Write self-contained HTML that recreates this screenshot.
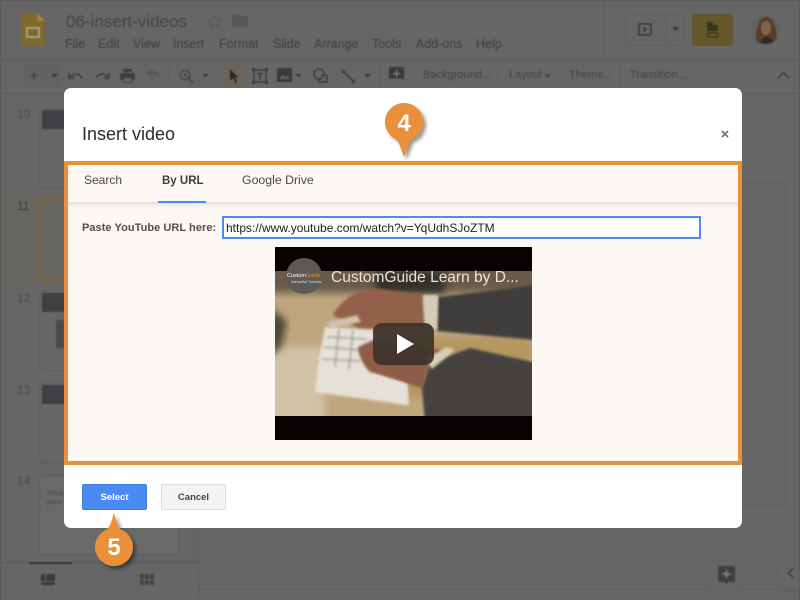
<!DOCTYPE html>
<html><head><meta charset="utf-8"><style>
*{box-sizing:border-box}
html,body{margin:0;padding:0;width:800px;height:600px;overflow:hidden;background:#666;font-family:"Liberation Sans",sans-serif}
.a{position:absolute}
.t{position:absolute;white-space:nowrap;line-height:1}
.m{color:#3e3e3e;font-size:12.5px;top:38px}
.tb{color:#424242;font-size:11px;top:70px}
.n{color:#4a4a4a;font-size:12px;left:17px}
.th{position:absolute;left:39px;width:140px;height:80px;border:1px solid #5e5e5e;border-radius:4px}
.hd{position:absolute;left:42px;width:28px;height:19px;background:#404044}
.tab{position:absolute;top:174px;line-height:1;color:#4a4a4a;white-space:nowrap}
#bg{position:absolute;left:0;top:0;width:800px;height:600px;filter:blur(.45px)}
</style></head><body>
<div id="bg">
<div class="a" style="left:0;top:0;width:800px;height:600px;background:#666;border:1px solid #555;border-bottom:0"></div>
<div class="a" style="left:1px;top:59px;width:798px;height:1px;background:#5a5a5a"></div>
<div class="a" style="left:1px;top:93px;width:798px;height:1px;background:#5c5c5c"></div>
<div class="a" style="left:604px;top:0;width:1px;height:59px;background:#5c5c5c"></div>

<svg class="a" style="left:21px;top:13px" width="25" height="33" viewBox="0 0 25 33"><path d="M2 0H16L24 8V31a2 2 0 0 1-2 2H2a2 2 0 0 1-2-2V2a2 2 0 0 1 2-2z" fill="#80692c"/><path d="M16 0L24 8H16z" fill="#9c8340"/><rect x="6" y="15" width="12" height="9" fill="none" stroke="#a89f80" stroke-width="2"/></svg>
<div class="t" style="left:66px;top:13px;font-size:17px;color:#444">06-insert-videos</div>
<svg class="a" style="left:207px;top:13px" width="16" height="16" viewBox="0 0 16 16"><path d="M8 1.500l2 4.600 5 .4-3.800 3.300 1.200 4.900L8 12.100l-4.400 2.600 1.200-4.900L1 6.500l5-.4z" fill="none" stroke="#5c5c5c" stroke-width="1.200"/></svg>
<svg class="a" style="left:232px;top:14px" width="16" height="13" viewBox="0 0 16 13"><path d="M1 0h5l2 2h7a1 1 0 0 1 1 1v9a1 1 0 0 1-1 1H1a1 1 0 0 1-1-1V1a1 1 0 0 1 1-1z" fill="#585858"/></svg>
<div class="t m" style="left:65px">File</div><div class="t m" style="left:98px">Edit</div><div class="t m" style="left:133px">View</div><div class="t m" style="left:173px">Insert</div><div class="t m" style="left:219px">Format</div><div class="t m" style="left:273px">Slide</div><div class="t m" style="left:314px">Arrange</div><div class="t m" style="left:372px">Tools</div><div class="t m" style="left:416px">Add-ons</div><div class="t m" style="left:476px">Help</div>

<div class="a" style="left:626px;top:14px;width:59px;height:32px;border:1px solid #5e5e5e;border-radius:4px"></div>
<div class="a" style="left:666px;top:14px;width:1px;height:32px;background:#5e5e5e"></div>
<svg class="a" style="left:638px;top:23px" width="15" height="13" viewBox="0 0 15 13"><rect x="1" y="1" width="12" height="11" fill="none" stroke="#3a3a3a" stroke-width="1.600"/><path d="M5.500 3.800L9.500 6.500 5.500 9.200z" fill="#3a3a3a"/></svg>
<svg class="a" style="left:671px;top:27px" width="9" height="5"><path d="M1 0h7L4.500 4.500z" fill="#3a3a3a"/></svg>
<div class="a" style="left:692px;top:14px;width:41px;height:32px;background:#66562c;border-radius:3px"></div>
<svg class="a" style="left:706px;top:22px" width="14" height="16" viewBox="0 0 14 16"><path d="M1 0h6v3h5v6H1z" fill="#38341f"/><rect x="1" y="11" width="11" height="4" rx="2" fill="none" stroke="#38341f" stroke-width="1.200"/></svg>
<svg class="a" style="left:751px;top:15px" width="29" height="29" viewBox="0 0 29 29"><defs><clipPath id="av"><circle cx="14.500" cy="14.500" r="14.500"/></clipPath></defs><g clip-path="url(#av)"><rect width="29" height="29" fill="#5e6261"/><path d="M5 29C4 14 8 2 15 2s11 10 11 27z" fill="#5e3d28"/><ellipse cx="15" cy="13" rx="5" ry="7" fill="#82654f"/><path d="M8 29c2-5 5-7 8-7s6 2 8 7z" fill="#2c2c30"/></g></svg>

<div class="a" style="left:23px;top:64px;width:38px;height:23px;background:#626262"></div>
<div class="t" style="left:29px;top:67px;font-size:17px;color:#3e3e3e">+</div>
<svg class="a" style="left:51px;top:74px" width="8" height="4"><path d="M0 0h7L3.500 4z" fill="#3e3e3e"/></svg>
<svg class="a" style="left:67px;top:69px" width="17" height="14" viewBox="0 0 17 14"><path d="M4 8c3-4 8-4 11 1" fill="none" stroke="#444" stroke-width="2"/><path d="M1 3v7h7z" fill="#444"/></svg>
<svg class="a" style="left:94px;top:69px" width="17" height="14" viewBox="0 0 17 14"><path d="M13 8C10 4 5 4 2 9" fill="none" stroke="#444" stroke-width="2"/><path d="M16 3v7H9z" fill="#444"/></svg>
<svg class="a" style="left:120px;top:69px" width="15" height="15" viewBox="0 0 15 15"><path d="M3 0h9v3H3zM1 4h13a1 1 0 0 1 1 1v6h-3v3H3v-3H0V5a1 1 0 0 1 1-1z" fill="#3e3e3e"/><rect x="4" y="9" width="7" height="4" fill="#666"/></svg>
<svg class="a" style="left:146px;top:69px" width="13" height="15" viewBox="0 0 15 15"><path d="M1 1h11v5H1zM13 3h2v5H8v6H6V7h7z" fill="#575757"/></svg>
<div class="a" style="left:168px;top:66px;width:1px;height:19px;background:#5d5d5d"></div>
<svg class="a" style="left:179px;top:69px" width="15" height="15" viewBox="0 0 16 16"><circle cx="6.500" cy="6.500" r="5" fill="none" stroke="#444" stroke-width="1.500"/><path d="M10 10l5 5" stroke="#444" stroke-width="2"/><path d="M4 6.500h5M6.500 4v5" stroke="#444"/></svg>
<svg class="a" style="left:202px;top:74px" width="8" height="4"><path d="M0 0h7L3.500 4z" fill="#3e3e3e"/></svg>
<div class="a" style="left:223px;top:64px;width:23px;height:23px;background:#6a6558"></div>
<svg class="a" style="left:229px;top:69px" width="11" height="14" viewBox="0 0 12 15"><path d="M1 0l9.500 9H6.500l2.500 5-2 1-2.500-5L1 12.500z" fill="#2a2a2a"/></svg>
<svg class="a" style="left:252px;top:68px" width="16" height="16" viewBox="0 0 16 16"><rect x="2" y="2" width="12" height="12" fill="none" stroke="#3a3a3a" stroke-width="1.200"/><path d="M5 5h6v1.500H8.800V12H7.200V6.500H5z" fill="#3a3a3a"/><path d="M0 0h3v3H0zM13 0h3v3h-3zM0 13h3v3H0zM13 13h3v3h-3z" fill="#3a3a3a"/></svg>
<svg class="a" style="left:277px;top:68px" width="15" height="14" viewBox="0 0 15 14"><rect width="15" height="14" fill="#3a3a3a"/><path d="M2 11l4-4 2.500 2.500L10.500 8 13 11z" fill="#666"/></svg>
<svg class="a" style="left:295px;top:74px" width="8" height="4"><path d="M0 0h7L3.500 4z" fill="#3e3e3e"/></svg>
<svg class="a" style="left:313px;top:68px" width="16" height="16" viewBox="0 0 16 16"><circle cx="6" cy="6" r="5" fill="none" stroke="#3e3e3e" stroke-width="1.500"/><path d="M8 7h6v7H6V11" fill="none" stroke="#3e3e3e" stroke-width="1.500"/></svg>
<svg class="a" style="left:341px;top:69px" width="15" height="15" viewBox="0 0 15 15"><path d="M2 2l11 11" stroke="#3e3e3e" stroke-width="1.600"/><circle cx="2.500" cy="2.500" r="1.800" fill="#3e3e3e"/><circle cx="12.500" cy="12.500" r="1.800" fill="#3e3e3e"/></svg>
<svg class="a" style="left:364px;top:74px" width="8" height="4"><path d="M0 0h7L3.500 4z" fill="#3e3e3e"/></svg>
<div class="a" style="left:379px;top:66px;width:1px;height:19px;background:#5d5d5d"></div>
<svg class="a" style="left:389px;top:67px" width="15" height="15" viewBox="0 0 15 15"><path d="M0 0h15v13l-3-1.500H0z" fill="#3a3a3a"/><path d="M7 3h1.500v3H11v1.500H8.500v3H7v-3H4V6h3z" fill="#777"/></svg>
<div class="t tb" style="left:423px">Background...</div>
<div class="a" style="left:498px;top:66px;width:1px;height:19px;background:#5d5d5d"></div>
<div class="t tb" style="left:509px">Layout</div>
<svg class="a" style="left:544px;top:74px" width="7" height="4"><path d="M0 0h7L3.500 4z" fill="#484848"/></svg>
<div class="t tb" style="left:569px">Theme...</div>
<div class="a" style="left:620px;top:66px;width:1px;height:19px;background:#5d5d5d"></div>
<div class="t tb" style="left:630px">Transition...</div>
<svg class="a" style="left:777px;top:71px" width="13" height="8" viewBox="0 0 13 8"><path d="M1 7l5.500-5.500L12 7" fill="none" stroke="#484848" stroke-width="2"/></svg>

<div class="a" style="left:1px;top:195px;width:197px;height:90px;background:#686660"></div>
<div class="a" style="left:198px;top:94px;width:1px;height:506px;background:#5c5c5c"></div>
<div class="a" style="left:1px;top:562px;width:197px;height:1px;background:#5a5a5a"></div>
<div class="t n" style="top:108px">10</div>
<div class="th" style="top:108px"></div><div class="hd" style="top:110px"></div>
<div class="t n" style="top:200px;color:#3a3a3a">11</div>
<div class="th" style="top:199px;border:2px solid #7a6835;height:82px"></div>
<div class="t n" style="top:292px">12</div>
<div class="th" style="top:291px"></div><div class="hd" style="top:293px"></div>
<div class="a" style="left:56px;top:320px;width:8px;height:28px;background:#4a4a4a"></div>
<div class="t n" style="top:384px">13</div>
<div class="th" style="top:383px"></div><div class="hd" style="top:385px"></div>
<div class="t n" style="top:475px">14</div>
<div class="th" style="top:475px;background:#6a6a6a;height:80px"></div>
<div class="t" style="left:47px;top:488px;font:7.500px/9px 'Liberation Serif',serif;color:#444">What<br>prese</div>
<div class="a" style="left:29px;top:562px;width:43px;height:2px;background:#333"></div>
<svg class="a" style="left:41px;top:574px" width="14" height="11" viewBox="0 0 14 11"><path d="M0 0h4v7H0zM5 0h9v7H5zM0 8h14v3H0z" fill="#3a3a3a"/></svg>
<svg class="a" style="left:140px;top:574px" width="14" height="11" viewBox="0 0 14 11"><path d="M0 0h4v5H0zM5 0h4v5H5zM10 0h4v5h-4zM0 6h4v5H0zM5 6h4v5H5zM10 6h4v5h-4z" fill="#444"/></svg>
<div class="a" style="left:190px;top:94px;width:6px;height:468px;background:#646464"></div>

<div class="a" style="left:742px;top:182px;width:44px;height:323px;background:#666;border:1px solid #5c605c;border-left:0"></div>
<div class="a" style="left:199px;top:589px;width:600px;height:1px;background:#5e5e5e"></div>
<div class="a" style="left:709px;top:557px;width:33px;height:33px;border:1px solid #606060;border-radius:3px"></div>
<svg class="a" style="left:718px;top:566px" width="17" height="18" viewBox="0 0 18 19"><path d="M2 0h14a2 2 0 0 1 2 2v13a2 2 0 0 1-2 2h-5l-2 2-2-2H2a2 2 0 0 1-2-2V2a2 2 0 0 1 2-2z" fill="#404040"/><path d="M9 3l1.500 4L15 8.500 10.500 10 9 14l-1.500-4L3 8.500 7.500 7z" fill="#777"/></svg>
<div class="a" style="left:777px;top:555px;width:38px;height:38px;border-radius:50%;border:1px solid #5e5e5e"></div>
<svg class="a" style="left:787px;top:568px" width="7" height="10" viewBox="0 0 7 10"><path d="M6 .5L1.500 5 6 9.500" fill="none" stroke="#3a3a3a" stroke-width="1.400"/></svg>
</div>

<div class="a" style="left:64px;top:88px;width:678px;height:440px;background:#fff;border-radius:7px"></div>
<div class="t" style="left:82px;top:125px;font-size:18px;color:#2b2b2b">Insert video</div>
<svg class="a" style="left:721px;top:130px" width="8" height="8" viewBox="0 0 8 8"><path d="M1 1l6 6M7 1L1 7" stroke="#777" stroke-width="1.800"/></svg>

<div class="a" style="left:64px;top:161px;width:678px;height:304px;background:#fdf8f4;border:4px solid #ea8f3a"></div>
<div class="a" style="left:68px;top:202px;width:670px;height:6px;background:linear-gradient(#e3dfdb,#fdf8f4)"></div>
<div class="tab" style="left:84px;font-size:12px">Search</div>
<div class="tab" style="left:162px;top:176px;font-weight:bold;color:#3d3d3d;font-size:11.5px">By URL</div>
<div class="tab" style="left:242px;font-size:12.3px">Google Drive</div>
<div class="a" style="left:158px;top:201px;width:48px;height:2px;background:#4d8bf0"></div>

<div class="t" style="left:82px;top:223px;font-size:11px;font-weight:bold;color:#505050;letter-spacing:.05px">Paste YouTube URL here:</div>
<div class="a" style="left:222px;top:216px;width:479px;height:23px;background:#fff;border:2px solid #4d8bf0"></div>
<div class="t" style="left:226px;top:222px;font-size:12px;color:#222">https://www.youtube.com/watch?v=YqUdhSJoZTM</div>

<svg class="a" style="left:275px;top:247px" width="257" height="193" viewBox="0 0 257 193">
<defs><filter id="b" x="-20%" y="-20%" width="140%" height="140%"><feGaussianBlur stdDeviation="4"/></filter><filter id="b2" x="-10%" y="-10%" width="120%" height="120%"><feGaussianBlur stdDeviation="1.300"/></filter>
<clipPath id="v"><rect y="24" width="257" height="145"/></clipPath></defs>
<rect width="257" height="193" fill="#060302"/>
<g clip-path="url(#v)">
<rect y="24" width="257" height="145" fill="#bfa67e"/>
<rect x="-10" y="14" width="280" height="32" fill="#6a5a48" filter="url(#b)"/>
<rect x="100" y="24" width="70" height="22" fill="#33302a" filter="url(#b)"/>
<rect x="-10" y="100" width="60" height="80" fill="#d3c3a6" filter="url(#b)"/>
<path d="M130 90H257V125L170 150H130z" fill="#b59560" filter="url(#b)"/>
<path d="M-5 60L12 75 6 100-5 110z" fill="#4a4236" filter="url(#b)"/>
<path d="M163 50L260 38V93L162 84z" fill="#403e3c" filter="url(#b2)"/>
<path d="M58 68C68 50 82 44 98 41L148 48 150 80 85 82z" fill="#936048" filter="url(#b2)"/>
<path d="M148 48h15l-1 35-12-3z" fill="#d6ccba" filter="url(#b2)"/>
<path d="M50 76L82 68 86 75 58 81z" fill="#cdc3af" filter="url(#b2)"/>
<path d="M50 80L98 83 132 136 132 158 40 145 44 112z" fill="#e6e1d7" filter="url(#b2)"/>
<path d="M52 90L92 92M49 100L96 104M47 112L85 114M64 82L60 120M78 83L74 122" stroke="#85807a" stroke-width="1" fill="none" filter="url(#b2)"/>
<path d="M83 100L98 93 168 103 152 123 147 141 95 125C88 118 84 110 83 100z" fill="#8f5c46" filter="url(#b2)"/>
<path d="M97 127L132 138 134 158 108 150z" fill="#e6e1d7" filter="url(#b2)"/>
<path d="M147 141L155 116 195 101 262 116V175H150z" fill="#45423f" filter="url(#b2)"/>
<path d="M150 112L172 100 180 103 157 122z" fill="#d8cdb8" filter="url(#b2)"/>
</g>
<rect x="98" y="76" width="61" height="42" rx="9" fill="#3c332c" fill-opacity=".93"/>
<path d="M122 87L139 97 122 107z" fill="#fff"/>
<circle cx="29" cy="29" r="18" fill="#5d5a56"/>
<text x="12" y="30" font-family="'Liberation Sans',sans-serif" font-size="5.500" fill="#fff">Custom<tspan fill="#e98f2e">Guide</tspan></text>
<text x="16" y="36" font-family="'Liberation Sans',sans-serif" font-size="3.500" fill="#ddd">Interactive Tutorials</text>
<text x="56" y="35" font-family="'Liberation Sans',sans-serif" font-size="15.500" fill="#e8e4df">CustomGuide Learn by D...</text>
</svg>

<div class="a" style="left:82px;top:484px;width:65px;height:26px;background:#4a8af4;border:1px solid #3f7fe0;border-radius:2px;color:#fff;font:bold 9.500px/25px 'Liberation Sans',sans-serif;text-align:center">Select</div>
<div class="a" style="left:161px;top:484px;width:65px;height:26px;background:#f3f3f3;border:1px solid #dcdcdc;border-radius:2px;color:#444;font:bold 9.500px/25px 'Liberation Sans',sans-serif;text-align:center">Cancel</div>

<svg class="a" style="left:375px;top:95px" width="60" height="70" viewBox="0 0 60 70"><defs><filter id="s" x="-30%" y="-30%" width="160%" height="160%"><feGaussianBlur stdDeviation="1.800"/></filter></defs>
<path d="M29 8a19 19 0 0 1 7 36.700c-2 2-4 9-7 17.300-3-8-5-15-7-17.300A19 19 0 0 1 29 8z" transform="translate(3,3)" fill="#000" opacity=".4" filter="url(#s)"/>
<path d="M29 8a19 19 0 0 1 7 36.700c-2 2-4 9-7 17.300-3-8-5-15-7-17.300A19 19 0 0 1 29 8z" fill="#ea8f3a"/>
<text x="29" y="36" text-anchor="middle" font-family="'Liberation Sans',sans-serif" font-weight="bold" font-size="24" fill="#fff">4</text></svg>
<svg class="a" style="left:85px;top:505px" width="60" height="70" viewBox="0 0 60 70"><defs><filter id="s2" x="-30%" y="-30%" width="160%" height="160%"><feGaussianBlur stdDeviation="1.800"/></filter></defs>
<path d="M29 8c2 7 4 14 7 16.500a19 19 0 1 1-14 0c3-2.500 5-9.500 7-16.500z" transform="translate(3,3)" fill="#000" opacity=".4" filter="url(#s2)"/>
<path d="M29 8c2 7 4 14 7 16.500a19 19 0 1 1-14 0c3-2.500 5-9.500 7-16.500z" fill="#ea8f3a"/>
<text x="29" y="50" text-anchor="middle" font-family="'Liberation Sans',sans-serif" font-weight="bold" font-size="24" fill="#fff">5</text></svg>
</body></html>
